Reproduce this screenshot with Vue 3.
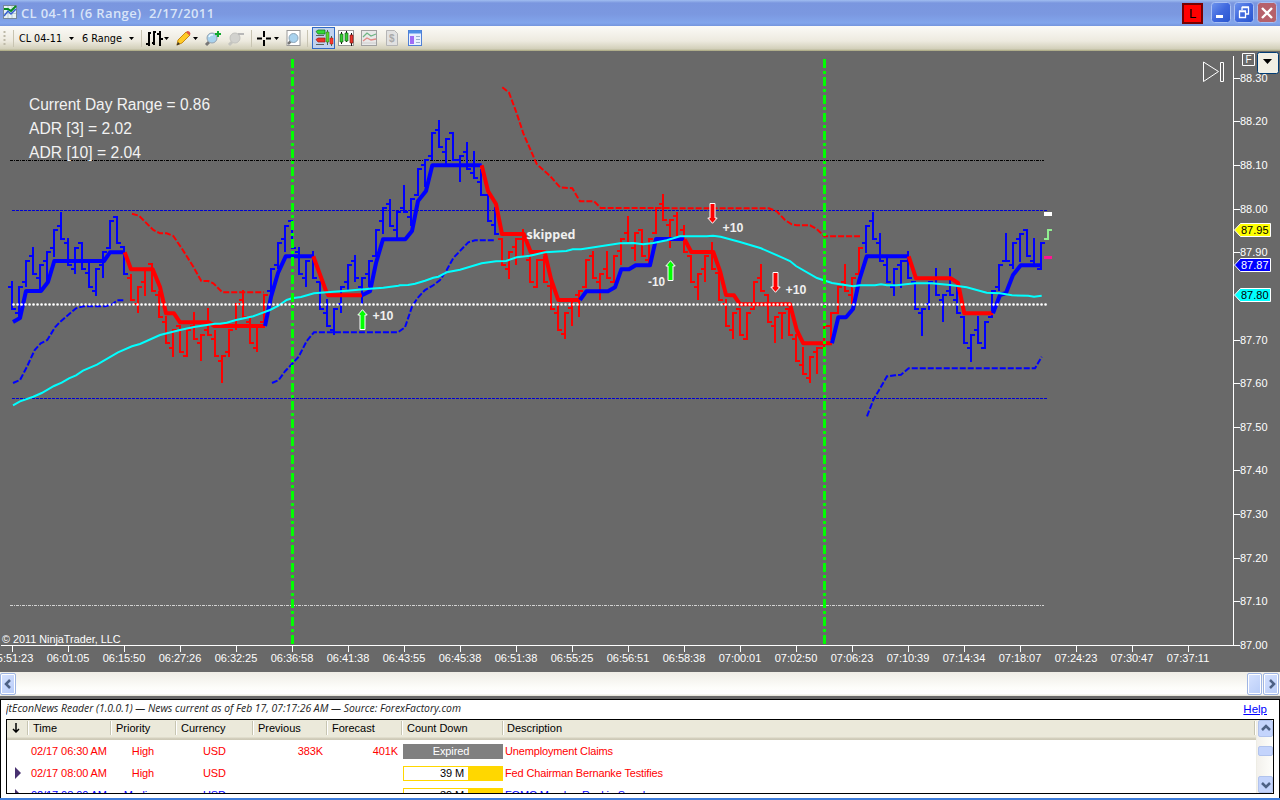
<script setup>
// Bar fields: high, low, open, close, in thirds of a pixel below the group's base line.
const barGroups = [
  { start: 0, base: 190, color: '#0000ff', bars: [[273,357,291,357],[291,385,369,291],[213,291,276,213],[171,252,198,252],[225,303,264,225],[186,280,213,186],[120,200,174,120],[67,147,108,147],[145,225,158,225],[174,252,237,174],[158,237,158,237],[213,291,250,291],[237,317,303,237],[186,265,225,186],[93,174,174,93],[80,158,80,158],[174,252,172,252]] },
  { start: 17, base: 190, color: '#ff0000', bars: [[252,330,264,330],[291,370,343,291],[240,317,276,240],[223,303,223,303],[303,381,314,381],[378,459,396,459],[420,501,474,420],[408,487,408,487],[420,501,499,420],[366,447,408,447],[434,514,459,434],[354,434,420,434],[420,499,447,499],[499,580,514,499],[420,501,487,420],[343,420,408,343],[300,381,330,381],[378,459,396,459],[408,487,474,408],[317,398,396,314]] },
  { start: 37, base: 190, color: '#0000ff', bars: [[237,317,303,237],[158,237,225,158],[108,186,147,108],[93,174,93,174],[172,252,186,252],[213,291,264,213],[183,264,198,264],[276,357,276,357],[328,408,369,408],[357,436,420,357],[291,369,343,291],[225,303,276,225],[196,276,213,264],[264,343,291,264],[213,291,252,213],[120,200,198,120],[53,133,93,53],[28,108,42,108],[67,145,120,67]] },
  { start: 56, base: 80, color: '#0000ff', bars: [[316,397,385,397],[357,437,411,357],[267,346,346,267],[240,320,255,240],[160,240,228,160],[120,201,150,201],[177,255,216,177],[160,240,160,240],[228,307,240,228],[186,267,216,267],[213,294,279,294],[267,346,306,346],[343,423,346,423],[381,462,435,462]] },
  { start: 70, base: 80, color: '#ff0000', bars: [[477,555,477,555],[516,597,567,516],[477,555,501,477],[447,528,477,528],[528,606,540,606],[540,621,621,540],[528,606,540,606]] },
  { start: 77, base: 180, color: '#ff0000', bars: [[306,387,318,387],[369,450,399,450],[399,478,462,399],[360,439,385,360],[333,412,345,333],[240,320,320,240],[213,294,228,294],[282,360,306,282],[213,294,267,294],[228,306,306,228],[177,255,213,177],[108,189,160,189],[160,243,204,160],[150,228,150,228],[177,255,240,177],[84,162,160,84],[42,121,72,121],[121,205,135,121],[96,177,108,177],[135,216,150,216]] },
  { start: 97, base: 190, color: '#ff0000', bars: [[198,276,198,276],[252,330,291,252],[198,276,237,198],[157,237,186,237],[250,330,250,330],[328,408,343,408],[369,448,420,369],[357,435,357,435],[369,448,448,369],[276,357,357,276],[222,303,264,303],[314,396,314,396],[381,460,408,381],[369,448,369,369],[354,435,357,435],[432,514,447,514],[472,552,526,552],[501,580,564,501],[474,553,487,474],[408,474,474,408],[369,450,408,369],[291,371,369,291],[222,303,276,303],[264,343,314,264],[174,252,252,174]] },
  { start: 122, base: 190, color: '#0000ff', bars: [[108,189,158,108],[67,147,93,147],[130,213,158,213],[204,276,225,276],[237,317,291,237],[213,293,225,213],[183,264,213,264],[276,357,276,357],[357,437,369,357],[276,360,343,276],[234,315,264,315],[315,397,330,315],[234,315,303,315],[288,369,330,369],[379,459,381,459],[435,515,474,435],[379,459,420,459],[396,474,474,396],[303,382,381,303],[225,303,291,225],[130,213,213,213],[158,237,225,158],[132,216,147,132],[120,198,120,198],[145,225,213,225],[158,237,237,158]] },
]

function barPath(group) {
  const y = v => group.base + Math.round(v / 3)
  return group.bars.map(([h, l, o, c], n) => {
    const x = 12 + 7 * (group.start + n)
    const top = Math.min(y(h), y(o) - 1, y(c) - 1)
    const low = Math.max(y(l), y(o) + 1, y(c) + 1)
    return `M${x} ${top}V${low}M${x - 4} ${y(o)}H${x}M${x} ${y(c)}H${x + 4}`
  }).join('')
}

// Points are thirds of a pixel from the origin of each piece.
function points(...pieces) {
  return pieces.map(([ox, oy, list]) => {
    const out = []
    for (let k = 0; k < list.length; k += 2) out.push((ox + list[k] / 3).toFixed(1) + ',' + (oy + list[k + 1] / 3).toFixed(1))
    return out.join(' ')
  }).join(' ')
}

const B = '#0000ff'
const R = '#ff0000'
const trend = [
  [B, points([0,190,[39,396,60,384,78,303,123,303,144,276,163,213,312,213,330,187,374,187]])],
  [R, points([0,190,[374,187,393,238,458,238,480,291,498,370,522,370,540,397,627,397,643,408,690,408]],[220,190,[135,408]])],
  [B, points([220,190,[135,408,153,321,174,249,197,199,280,199]])],
  [R, points([220,190,[280,199,318,303,325,316,426,316]])],
  [B, points([220,190,[426,316,450,304,468,219,489,148,556,148]],[400,80,[36,453,54,363,78,333,97,256,245,256]])],
  [R, points([400,80,[245,256,264,333,288,372,306,462,371,462,392,516,434,516,453,597,474,658]],[520,180,[115,360,180,360]])],
  [B, points([520,180,[180,360,199,334,264,334,285,322,304,268,327,268,347,256,390,256,408,177,492,177]])],
  [R, points([520,180,[494,178,514,216,580,216,601,276,618,345]],[680,190,[162,316,180,343,330,343,350,420,370,460,456,460]])],
  [B, points([680,190,[456,460,475,382,498,382,519,357,538,270,560,199]],[850,190,[176,199]])],
  [R, points([850,190,[176,199,198,265,303,265,324,279,343,370,429,370]])],
  [B, points([850,190,[429,370,450,315,468,309,489,255,512,226,575,226]])],
]
const average = points(
  [0,190,[39,646,60,634,100,620,125,609,162,588,185,578,207,565,228,556,249,542,291,524,354,487,396,469,420,462,480,435,540,420,582,411,645,401]],
  [220,190,[0,401,20,398,48,390,100,379,150,360,174,348,200,330,216,325,243,321,282,310,320,307,380,302,450,296,490,293,535,287]],
  [400,80,[0,616,24,615,45,611,75,602,100,593,115,590,140,577,180,569,245,550,288,544,318,543,350,532]],
  [520,180,[30,227,75,217,139,213,158,208,183,208,300,190,340,189,369,193,400,189,440,181]],
  [680,190,[0,139,80,139,99,137,122,140,180,156,243,175,312,205,330,213,348,228,411,264,456,279]],
  [850,190,[9,289,30,286,75,286,93,283,111,286,140,286,195,280,246,280,300,285,350,292,410,308,450,310,486,316,535,317,552,320,575,317]],
)
const bands = [
  [B, points([0,190,[39,579,60,570,80,532,104,480,122,460,142,450,165,412,180,396,228,355,250,349,315,349,335,344,352,331,370,331]])],
  [R, points([0,190,[396,71,417,77,460,120,480,130,500,130,520,138,545,175,580,230,604,273,625,273,640,280,667,307]],[220,190,[10,307,132,307]])],
  [B, points([220,190,[156,579,176,570,196,543,216,522,236,500,260,453,282,427,534,427]],[400,80,[15,742,36,680,52,655,75,630,97,618,120,600,140,570,160,534,205,487,225,481,287,481]])],
  [R, points([400,80,[307,22,327,38,350,100,370,160,410,252,450,288,480,322,517,325,540,364,582,364,602,384]],[680,190,[267,55,290,64,315,90,335,103,350,106,390,106,410,117,433,139,540,139]])],
  [B, points([850,190,[51,679,70,630,111,559,135,556,153,554,176,535,555,535,575,500]])],
]

const prices = Array.from({ length: 14 }, (_, k) => ({ y: Math.round(645 - 43.63 * k), text: (87 + k / 10).toFixed(2) })).filter(p => p.text !== '87.80')
const times = ['05:51:23','06:01:05','06:15:50','06:27:26','06:32:25','06:36:58','06:41:38','06:43:55','06:45:38','06:51:38','06:55:25','06:56:51','06:58:38','07:00:01','07:02:50','07:06:23','07:10:39','07:14:34','07:18:07','07:24:23','07:30:47','07:37:11']
const tags = [
  { y: 223, text: '87.95', fill: '#ffff00', ink: '#000' },
  { y: 258, text: '87.87', fill: '#0000ff', ink: '#fff' },
  { y: 288, text: '87.80', fill: '#00ffff', ink: '#000' },
]
const arrows = [
  { x: 362, y: 309, flip: 1, fill: '#00ff00' },
  { x: 670, y: 260, flip: 1, fill: '#00ff00' },
  { x: 712, y: 224, flip: -1, fill: '#ff0000' },
  { x: 775, y: 293, flip: -1, fill: '#ff0000' },
]
const notes = [
  { x: 372.5, y: 320, w: 21, t: '+10' },
  { x: 648, y: 286, w: 17, t: '-10' },
  { x: 722.5, y: 232, w: 21, t: '+10' },
  { x: 785.5, y: 294, w: 21, t: '+10' },
  { x: 526.5, y: 239, w: 49, t: 'skipped', wide: true },
]
const rows = [
  { mark: false, time: '02/17 06:30 AM', pri: 'High', cur: 'USD', prev: '383K', fore: '401K', count: 'Expired', desc: 'Unemployment Claims', cls: 'high' },
  { mark: true, time: '02/17 08:00 AM', pri: 'High', cur: 'USD', prev: '', fore: '', count: '39 M', desc: 'Fed Chairman Bernanke Testifies', cls: 'high' },
  { mark: true, time: '02/17 08:00 AM', pri: 'Medium', cur: 'USD', prev: '', fore: '', count: '39 M', desc: 'FOMC Member Raskin Speaks', cls: 'medium' },
]
</script>

<template>
  <div class="window">
    <header class="title">
      <svg class="app-icon" width="15" height="15" viewBox="0 0 15 15"><rect x=".5" y=".5" width="13" height="13" fill="#e7f2f5" stroke="#778899" /><path d="M1 4.500H13M1 8.500H13M5 1V13M9 1V13" stroke="#b8cad5" /><path d="M1 11L5 6L8 9L13 4" fill="none" stroke="#355ed1" stroke-width="1.500" /><path d="M1 4H5L8 6L13 1" fill="none" stroke="#078b1d" stroke-width="2" /></svg>
      <span class="caption">CL 04-11 (6 Range)&nbsp; 2/17/2011</span>
      <span class="link-btn">L</span>
      <svg class="controls" width="66" height="22" viewBox="0 0 66 22">
        <defs><linearGradient id="cap" x2="1" y2="1"><stop offset="0" stop-color="#6f95ee" /><stop offset=".5" stop-color="#3f68de" /><stop offset="1" stop-color="#2855cf" /></linearGradient></defs>
        <g stroke="#a9c0f3"><rect x=".5" y=".5" width="19" height="20" rx="3" fill="url(#cap)" /><rect x="23.500" y=".5" width="19" height="20" rx="3" fill="url(#cap)" /><rect x="46.500" y=".5" width="19" height="20" rx="3" fill="#b6616b" /></g>
        <path d="M5 14.500H12" stroke="#fff" stroke-width="3" />
        <path d="M31 8V5.500H37.500V12H35M31 5H38M28.500 9.500H34.500V15.500H28.500ZM28 9H35" fill="none" stroke="#fff" stroke-width="1.300" />
        <path d="M51 6L61 16M61 6L51 16" stroke="#fff" stroke-width="2.400" />
      </svg>
    </header>

    <nav class="toolbar">
      <svg width="430" height="25" viewBox="0 26 430 25">
        <path d="M4.500 31V46" stroke="#bdb9a8" stroke-width="2" stroke-dasharray="2 2" />
        <path d="M13.500 30V47M141.500 30V47M251.500 30V47M307.500 30V47" stroke="#c8c4b2" />
        <g class="tb-text"><text x="19" y="42" textLength="43" lengthAdjust="spacingAndGlyphs">CL 04-11</text><text x="82" y="42" textLength="40" lengthAdjust="spacingAndGlyphs">6 Range</text></g>
        <path d="M69 37h5l-2.500 3zM129 37h5l-2.500 3zM164 37h5l-2.500 3zM193 37h5l-2.500 3zM274 37h5l-2.500 3z" />
        <path d="M149 32V46M146 44H149M149 33H151M154 31V45M152 43H154M154 32H156M160 31V46M157 34H160M160 39H163" stroke="#000" stroke-width="2" />
        <path d="M178 40L186 32L190 35L182 43L177 45Z" fill="#ffca28" stroke="#c68a16" /><path d="M186 32L187.500 31Q190 31 190.500 34L189.500 35.500Z" fill="#df5647" /><path d="M176.500 45.500L178 42L180 44Z" fill="#333" />
        <g><path d="M209 42L206 45" stroke="#777" stroke-width="3" /><circle cx="212" cy="38" r="5" fill="#a8d2ee" stroke="#93a2b1" /><path d="M209 37Q210 34 213 35" stroke="#eaf8ff" fill="none" stroke-width="1.500" /><path d="M218 31V37M215 34H221" stroke="#10a82f" stroke-width="2" /></g>
        <g><path d="M232 42L229 45" stroke="#c4c4bf" stroke-width="3" /><circle cx="235" cy="38" r="5" fill="#d2d2ce" stroke="#c2c2be" /><path d="M238 34H244" stroke="#b8b8b8" stroke-width="2" /></g>
        <path d="M264 31V37M264 40V46M257 38.500H262M266 38.500H271" stroke="#000" stroke-width="2" />
        <rect x="287" y="30.500" width="13" height="15" fill="#fff" stroke="#999" /><path d="M291 41L288 44" stroke="#777" stroke-width="2.500" /><circle cx="293.500" cy="38" r="4.500" fill="#a8d2ee" stroke="#8ba4b7" />
        <rect x="312.500" y="27.500" width="22" height="21" fill="#c1d2ee" stroke="#316ac5" />
        <path d="M316 35.500H324M316 44.500H324" stroke="#59635d" /><path d="M316 31.500L318 30H325V34H318Z" fill="#35d838" stroke="#14701e" stroke-width=".7" /><path d="M316 39.500L318 38H325V42H318Z" fill="#ee3329" stroke="#982119" stroke-width=".7" /><path d="M327.500 30V45M331.500 36V46" stroke="#4c6b48" /><path d="M326 32h3v10h-3z" fill="#5bd82f" stroke="#276f1b" stroke-width=".5" /><path d="M330 38h3v6h-3z" fill="#ff382b" stroke="#8e1c14" stroke-width=".5" />
        <rect x="338.500" y="30.500" width="15" height="15" fill="#fff" stroke="#979797" /><path d="M341.500 32V44M346.500 31V42M351.500 33V46" stroke="#171717" /><path d="M340 34h3v8h-3zM345 33h3v8h-3z" fill="#32ce32" stroke="#17611b" stroke-width=".7" /><path d="M350 35h3v8h-3z" fill="#ef3429" stroke="#721b18" stroke-width=".7" />
        <rect x="361.500" y="30.500" width="15" height="15" fill="#e9e9e9" stroke="#a0a0a0" /><path d="M363 37L367 33L371 36L376 34" fill="none" stroke="#6fb584" stroke-width="1.300" /><path d="M363 41L367 38L371 40L376 39" fill="none" stroke="#e18a86" stroke-width="1.300" /><path d="M362 43H376" stroke="#ccc" />
        <path d="M386.500 30.500h8l3 3v12h-11z" fill="#e1e1e1" stroke="#b5b5b5" /><text x="389" y="42" class="dollar">$</text>
        <rect x="408.500" y="30.500" width="13" height="15" fill="#e9f0ff" stroke="#4f80d6" /><path d="M409 32H421" stroke="#4f90e6" stroke-width="3" /><path d="M410 36H414V44H410Z" fill="#a06cf5" /><path d="M416 36.500H420M416 39.500H420M416 42.500H420" stroke="#9ab0d0" />
      </svg>
    </nav>

    <svg class="chart" width="1280" height="621" viewBox="0 51 1280 621">
      <g fill="none">
        <path d="M12 210.500H1048M12 398.500H1048" stroke="#0000d4" stroke-dasharray="3 1" />
        <path d="M10 160.500H1044" stroke="#000" stroke-dasharray="3 1 1 1" />
        <path d="M10 605.500H1044" stroke="#d3d3d3" stroke-dasharray="3 1 1 1" />
        <path v-for="g in barGroups" :key="g.start" :d="barPath(g)" :stroke="g.color" stroke-width="2" />
        <polyline v-for="(b, i) in bands" :key="'b' + i" :points="b[1]" :stroke="b[0]" stroke-width="2" stroke-dasharray="6 2" />
        <polyline v-for="(t, i) in trend" :key="'t' + i" :points="t[1]" :stroke="t[0]" stroke-width="4" stroke-linejoin="round" />
        <polyline :points="average" stroke="#00ffff" stroke-width="2" />
        <path d="M13.500 304.500H1047" stroke="#fff" stroke-width="2.600" stroke-linecap="round" stroke-dasharray="0.100 3.900" />
        <path d="M292.500 59V645M824.500 59V645" stroke="#00ff00" stroke-width="3" stroke-dasharray="9 3 3 3" />
        <path d="M1044 239H1048M1048 240V230M1047 230H1052" stroke="#90ee90" stroke-width="2" />
      </g>
      <rect x="1044" y="212" width="8" height="4" fill="#fff" />
      <rect x="1044" y="256" width="8" height="3" fill="#ff1493" />
      <g v-for="a in arrows" :key="a.x" :transform="`translate(${a.x + .5} ${a.y}) scale(1 ${a.flip})`"><path d="M0 .7L4.700 6H2.500V20.500H-2.500V6H-4.700Z" :fill="a.fill" stroke="#fff" /></g>
      <text v-for="n in notes" :key="n.x" class="note" :class="{ wide: n.wide }" :x="n.x" :y="n.y" :textLength="n.w" lengthAdjust="spacingAndGlyphs">{{ n.t }}</text>
      <g class="info">
        <text x="29" y="110" textLength="181" lengthAdjust="spacingAndGlyphs">Current Day Range = 0.86</text>
        <text x="29" y="134" textLength="103" lengthAdjust="spacingAndGlyphs">ADR [3] = 2.02</text>
        <text x="29" y="158" textLength="112" lengthAdjust="spacingAndGlyphs">ADR [10] = 2.04</text>
      </g>
      <path d="M1203.500 62V81.500L1218.500 71.500ZM1220.500 62.500H1223.500V81.500H1220.500ZM1242.500 53.500H1254.500V65.500H1242.500Z" fill="none" stroke="#fff" />
      <path d="M1233.500 56V645.500M1 645.500H1234" stroke="#fff" />
      <g class="axis">
        <text x="1245.500" y="63" class="f">F</text>
        <g v-for="p in prices" :key="p.text"><path :d="`M1234 ${p.y + .5}H1240`" stroke="#fff" /><text x="1240" :y="p.y + 4" textLength="27.500">{{ p.text }}</text></g>
        <g v-for="(t, i) in times" :key="t"><path :d="`M${12.5 + 56 * i} 646V652`" stroke="#fff" /><text :x="12 + 56 * i" y="662" text-anchor="middle" textLength="42.500">{{ t }}</text></g>
        <text x="2" y="643" textLength="118.500" lengthAdjust="spacingAndGlyphs">© 2011 NinjaTrader, LLC</text>
      </g>
      <g v-for="t in tags" :key="t.text">
        <path :d="`M1234.500 ${t.y + 7}L1240.500 ${t.y + .5}H1270.500V${t.y + 13.5}H1240.500Z`" :fill="t.fill" stroke="#fff" />
        <text x="1241" :y="t.y + 11" class="tag" :fill="t.ink" textLength="27.500">{{ t.text }}</text>
      </g>
      <rect x="1257.500" y="52.500" width="21" height="21" rx="2" fill="#f1efe4" stroke="#003c74" /><path d="M1263 59h9l-4.500 5z" />
    </svg>

    <div class="hscroll">
      <span class="sbtn left"><svg width="15" height="20"><path d="M9 6L5 10L9 14" /></svg></span>
      <span class="sbtn thumb"></span>
      <span class="sbtn right"><svg width="15" height="20"><path d="M6 6L10 10L6 14" /></svg></span>
    </div>

    <section class="news">
      <div class="news-head"><svg width="470" height="18"><text x="0" y="12" textLength="455" lengthAdjust="spacingAndGlyphs">jtEconNews Reader (1.0.0.1) — News current as of Feb 17, 07:17:26 AM — Source: ForexFactory.com</text></svg><u>Help</u></div>
      <div class="table">
        <div class="grid-area">
          <div class="row head"><span class="arrow"><svg width="8" height="12"><path d="M4 2V11M1 8L4 11L7 8" fill="none" stroke="#000" stroke-width="1.500" /></svg></span><span>Time</span><span>Priority</span><span>Currency</span><span>Previous</span><span>Forecast</span><span>Count Down</span><span>Description</span></div>
          <div v-for="(r, i) in rows" :key="i" class="row" :class="r.cls">
            <span class="mark"><i v-if="r.mark"></i></span><span class="time">{{ r.time }}</span><span class="pri">{{ r.pri }}</span><span class="cur">{{ r.cur }}</span><span class="num">{{ r.prev }}</span><span class="num">{{ r.fore }}</span>
            <span class="cell"><b :class="i ? 'progress' : 'expired'">{{ r.count }}</b></span><span class="desc">{{ r.desc }}</span>
          </div>
        </div>
        <div class="vscroll">
          <span class="vbtn"><svg width="14" height="15"><path d="M3 9L7 5L11 9" /></svg></span>
          <span class="vbtn vthumb"></span>
          <span class="vbtn down"><svg width="14" height="15"><path d="M3 6L7 10L11 6" /></svg></span>
        </div>
      </div>
    </section>
    <div class="frame-bottom"></div>
  </div>
</template>

<style>
body { margin: 0; background: #696969; overflow: hidden; }
</style>
<style scoped>
.window { width: 1280px; height: 800px; display: flex; flex-direction: column; overflow: hidden; font: 11px "Liberation Sans", sans-serif; color: #000; background: #696969; }
.window * { box-sizing: border-box; }
svg { display: block; flex: none; }
.title { height: 26px; flex: none; display: flex; align-items: center; padding: 0 2px 0 3px; background: linear-gradient(#a0bdf0 0, #7a96df 3px, #7b98e0 14px, #82a5ec 23px, #7595dd 26px); }
.app-icon { margin-top: -2px; }
.caption { margin-left: 3px; font: 600 13px/26px "Open Sans", sans-serif; letter-spacing: .37px; color: #d8e4f8; white-space: nowrap; }
.link-btn { margin-left: auto; width: 21px; height: 21px; border: 2px solid #700; background: #f00; color: #000; font-size: 13px; line-height: 18px; text-align: center; }
.controls { margin-left: 8px; margin-right: 1px; }
.toolbar { height: 25px; flex: none; background: linear-gradient(#fbfaf7, #edeadf 60%, #d2cfb9 92%, #a7a57c); }
.tb-text { font: 11px "DejaVu Sans Condensed", "DejaVu Sans", sans-serif; }
.dollar { font: bold 10px "Liberation Sans", sans-serif; fill: #aaa; }
.info { font: 16px "Liberation Sans", sans-serif; fill: #f2f2f2; }
.note { font: bold 12.500px "Liberation Sans", sans-serif; fill: #f0f0f0; }
.wide { font: bold 12px "Open Sans", sans-serif; }
.axis { font: 11px "Liberation Sans", sans-serif; fill: #fff; }
.tag { font: 11px "Liberation Sans", sans-serif; }
.f { font-size: 10px; }
.hscroll { height: 24px; flex: none; display: flex; align-items: center; background: linear-gradient(#efede6, #fdfdfa 65%, #fff 90%, #e4e2d6); }
.sbtn { width: 16px; height: 22px; border: 1px solid #9fb5e3; border-radius: 2px; background: linear-gradient(135deg, #d6e2ff, #b8ccf8); box-shadow: inset 0 0 0 1px #fff; }
.sbtn path, .vbtn path { fill: none; stroke: #4d6185; stroke-width: 2.500; }
.thumb { margin-left: auto; width: 15px; }
.right { margin: 0 1px; }
.news { height: 99px; margin-top: 3px; flex: none; border: 1px solid #000; border-bottom: 0; background: #fff; padding: 0 5px; }
.news-head { height: 19px; display: flex; justify-content: space-between; padding-right: 7px; }
.news-head text { font: italic 500 10px "Open Sans", sans-serif; fill: #222; }
.news-head u { font-size: 11.500px; line-height: 18px; color: #00f; }
.table { height: 75px; border: 1px solid #000; display: flex; overflow: hidden; }
.grid-area { flex: 1; overflow: hidden; }
.row { height: 22px; display: grid; grid-template-columns: 21px 83px 65px 77px 74px 75px 101px 1fr; align-items: center; white-space: nowrap; letter-spacing: -.08px; }
.head { height: 20px; background: linear-gradient(#ebe9da 17px, #d5d1bf 18px, #cbc7b4); letter-spacing: 0; }
.head span { height: 14px; line-height: 14px; margin-bottom: 4px; padding-left: 5px; border-right: 1px solid #c7c5b2; box-shadow: 1px 0 #fff; }
.head span:last-child { margin-right: 1px; padding-left: 4px; }
.high { color: #f00; }
.medium { color: #00f; }
.mark { padding-left: 8px; }
.mark i { display: block; border-left: 6px solid #483170; border-top: 6px solid transparent; border-bottom: 6px solid transparent; }
.time { padding-left: 3px; }
.pri, .cur { text-align: center; }
.pri { padding-right: 1px; }
.num { text-align: right; padding-right: 4px; }
.cell b { display: block; width: 100px; height: 15px; margin-left: 1px; font-weight: normal; line-height: 15px; }
.expired { background: #808080; color: #fff; text-align: center; padding-right: 4px; }
.progress { border: 1px solid #ffd700; background: linear-gradient(90deg, #fff 64px, #ffd700 64px); color: #000; line-height: 13px !important; padding-left: 36px; }
.desc { padding-left: 2px; letter-spacing: -.15px; }
.vscroll { width: 17px; display: flex; flex-direction: column; align-items: center; border-left: 1px solid #eeede5; background: linear-gradient(90deg, #f3f1ec, #fefefb); }
.vbtn { width: 15px; height: 17px; border: 1px solid #b1c3ed; border-radius: 2px; background: #c4d4fc; }
.vthumb { height: 10px; margin-top: 9px; }
.down { margin-top: auto; }
.frame-bottom { height: 2px; flex: none; background: #3c7bd9; }
</style>
